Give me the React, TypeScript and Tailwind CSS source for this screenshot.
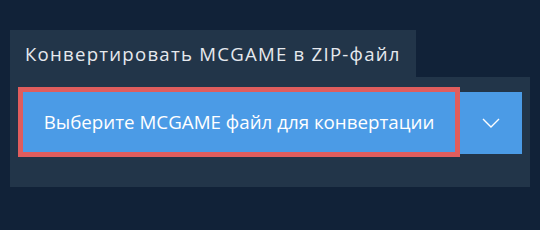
import React from "react";

export default function App() {
  return (
    <div className="w-[540px] h-[230px] bg-[#112238] pt-[30px] px-[10px]" style={{ fontFamily: "'Open Sans', 'Noto Sans', sans-serif" }}>
      <div className="w-[406px] h-[47px] bg-[#223549] pl-[15px] flex items-center text-[18.6px] tracking-[1.25px] text-[#e6e9ee]">
        Конвертировать MCGAME в ZIP-файл
      </div>
      <div className="w-[520px] h-[110px] bg-[#223549] pl-[8px] pt-[10px] flex items-start">
        <button className="w-[442px] h-[70px] border-[5px] border-[#e05d5d] bg-[#4b9be6] text-white text-[18.75px] flex items-center justify-center">
          Выберите MCGAME файл для конвертации
        </button>
        <button className="w-[62px] h-[62px] mt-[5px] bg-[#4b9be6] flex items-center justify-center">
          <svg width="18" height="10" viewBox="0 0 18 10" fill="none">
            <path d="M1 1L9 9L17 1" stroke="white" strokeWidth="1.4" />
          </svg>
        </button>
      </div>
    </div>
  );
}
